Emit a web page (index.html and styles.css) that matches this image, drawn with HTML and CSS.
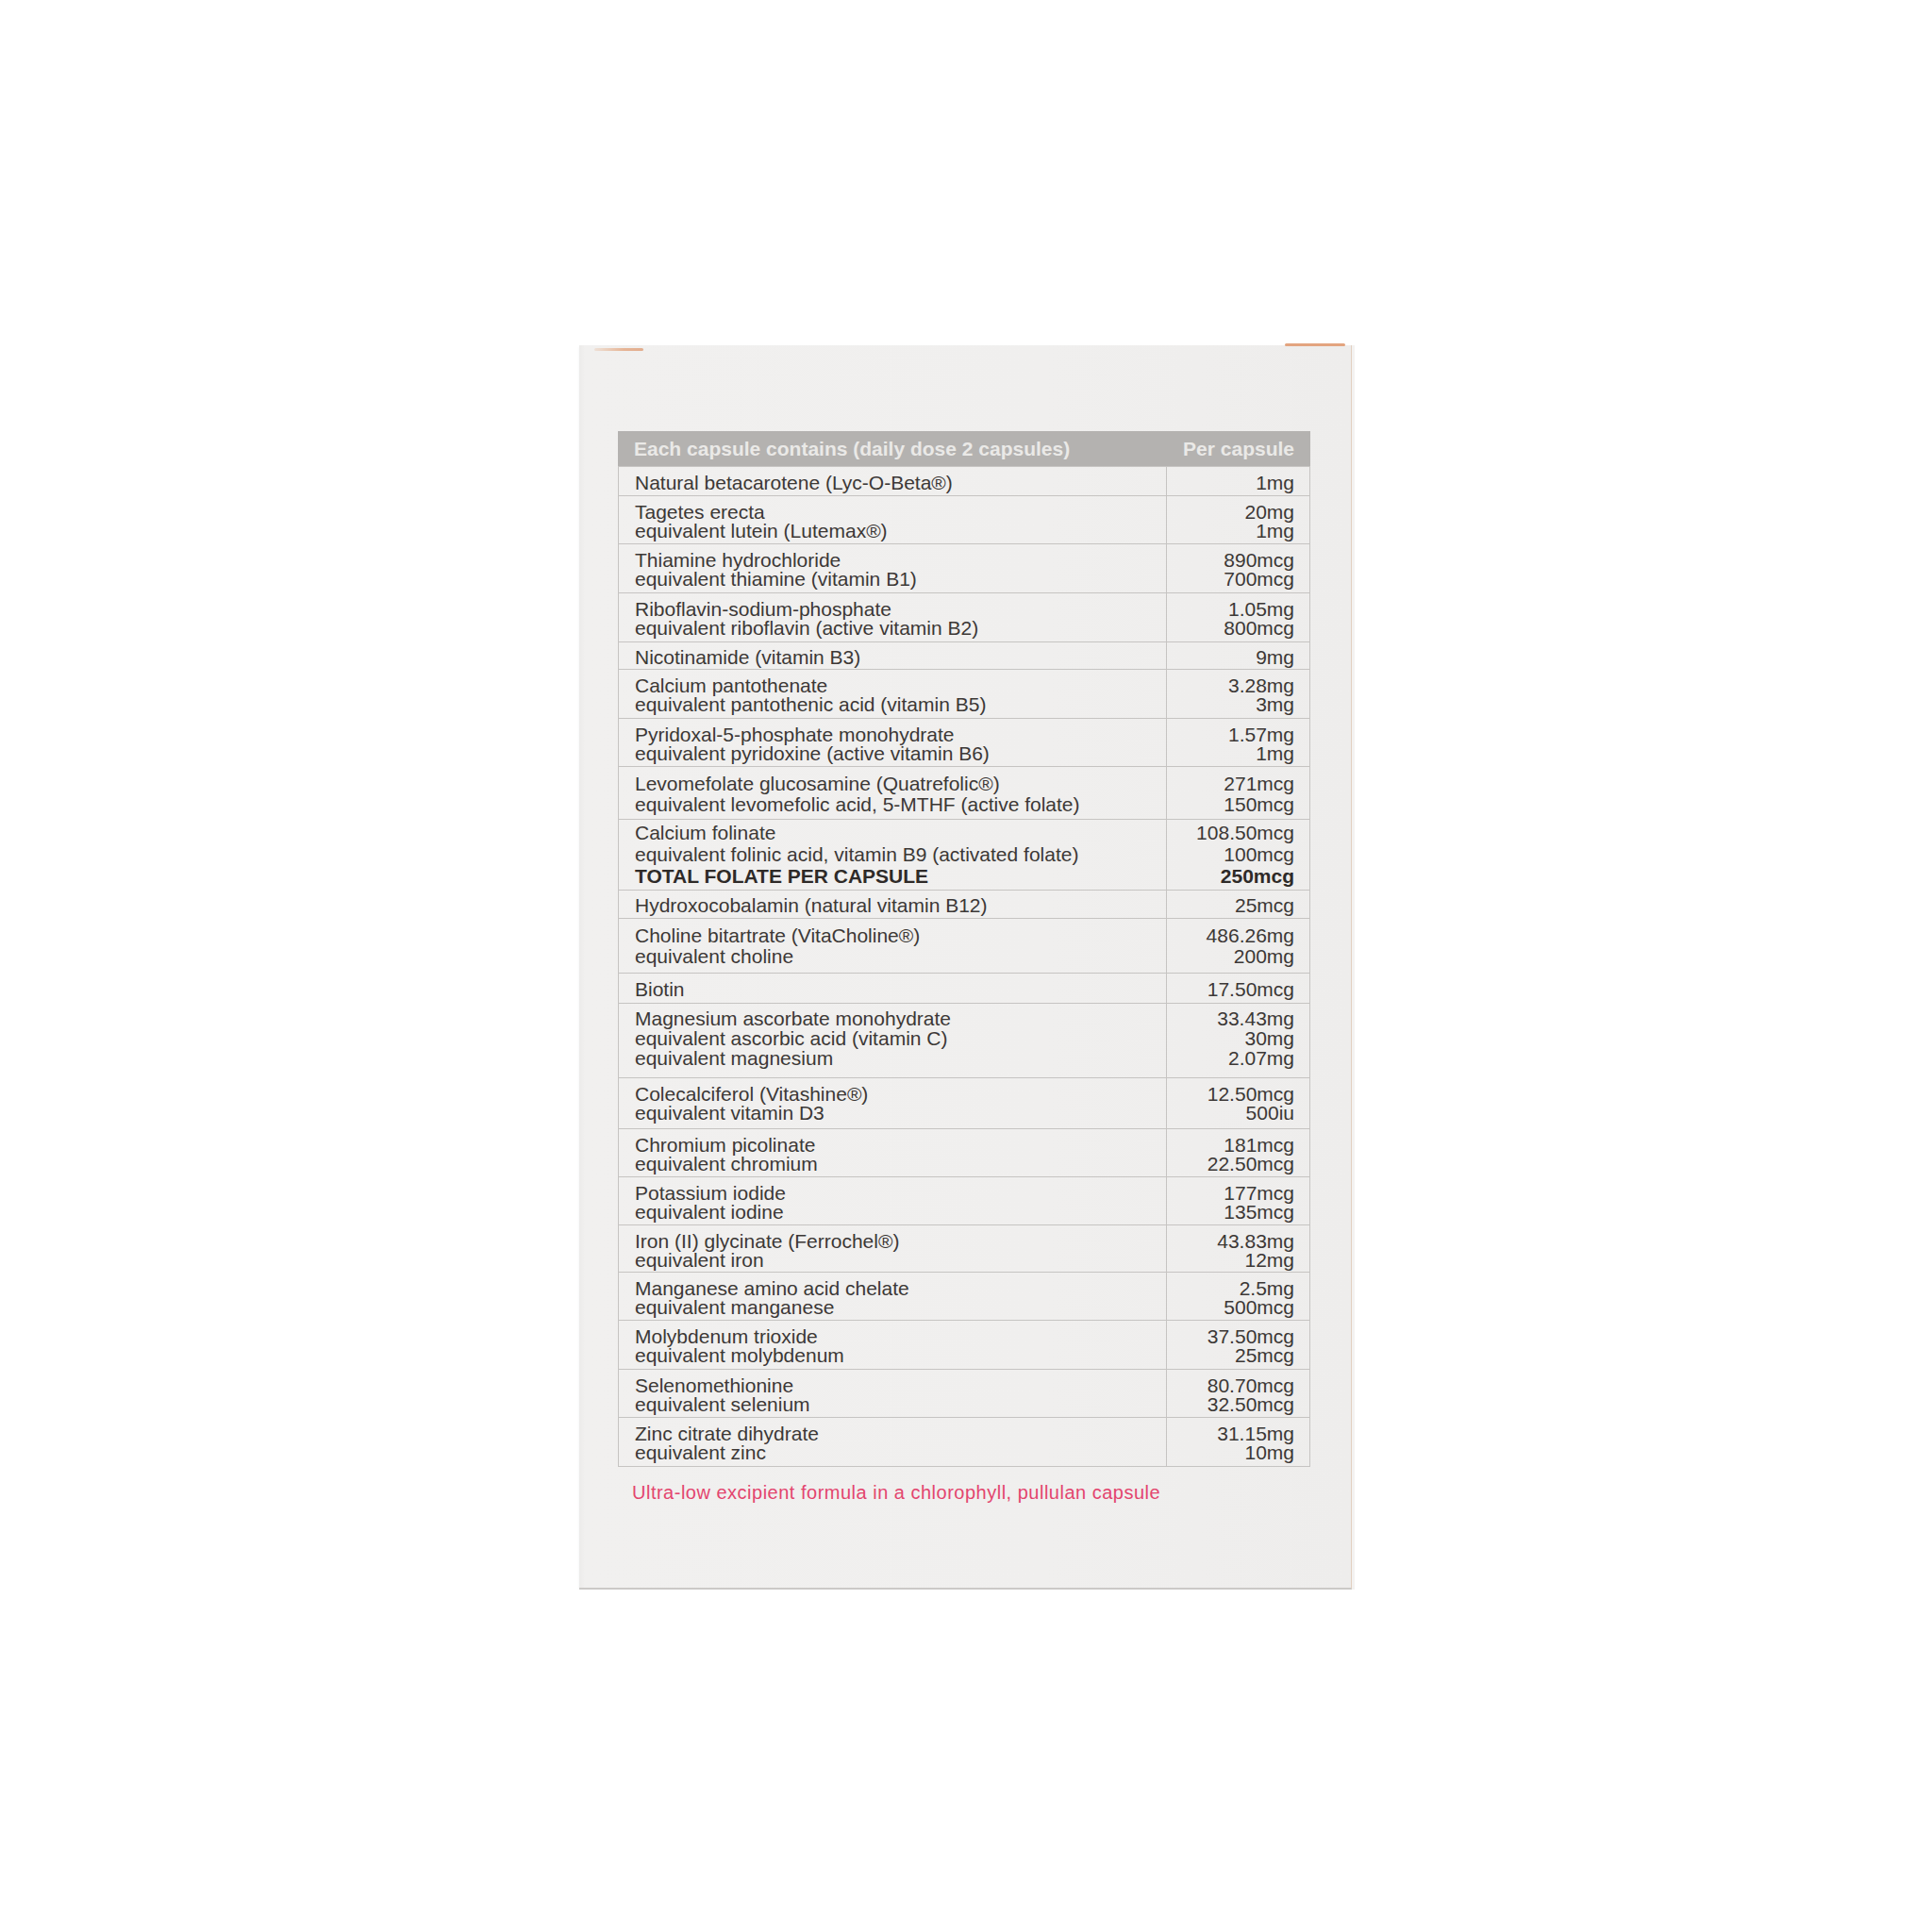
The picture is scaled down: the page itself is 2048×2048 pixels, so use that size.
FILE: index.html
```html
<!DOCTYPE html>
<html lang="en">
<head>
<meta charset="utf-8">
<title>Each capsule contains</title>
<link rel="stylesheet" href="styles.css">
</head>
<body>
<div class="card">
  <span class="tab tab-left"></span>
  <span class="tab tab-right"></span>
  <div class="panel">
    <div class="head">
      <span>Each capsule contains (daily dose 2 capsules)</span>
      <span>Per capsule</span>
    </div>
    <div class="row"><div class="name">Natural betacarotene (Lyc-O-Beta®)</div><div class="val">1mg</div></div>
    <div class="row r2"><div class="name">Tagetes erecta<br>equivalent lutein (Lutemax®)</div><div class="val">20mg<br>1mg</div></div>
    <div class="row r2 pb4"><div class="name">Thiamine hydrochloride<br>equivalent thiamine (vitamin B1)</div><div class="val">890mcg<br>700mcg</div></div>
    <div class="row r2 pb4"><div class="name">Riboflavin-sodium-phosphate<br>equivalent riboflavin (active vitamin B2)</div><div class="val">1.05mg<br>800mcg</div></div>
    <div class="row short"><div class="name">Nicotinamide (vitamin B3)</div><div class="val">9mg</div></div>
    <div class="row r2 pb4"><div class="name">Calcium pantothenate<br>equivalent pantothenic acid (vitamin B5)</div><div class="val">3.28mg<br>3mg</div></div>
    <div class="row r2"><div class="name">Pyridoxal-5-phosphate monohydrate<br>equivalent pyridoxine (active vitamin B6)</div><div class="val">1.57mg<br>1mg</div></div>
    <div class="row loose22"><div class="name">Levomefolate glucosamine (Quatrefolic®)<br>equivalent levomefolic acid, 5-MTHF (active folate)</div><div class="val">271mcg<br>150mcg</div></div>
    <div class="row folate"><div class="name">Calcium folinate<br>equivalent folinic acid, vitamin B9 (activated folate)<br><b>TOTAL FOLATE PER CAPSULE</b></div><div class="val">108.50mcg<br>100mcg<br><b>250mcg</b></div></div>
    <div class="row short2"><div class="name">Hydroxocobalamin (natural vitamin B12)</div><div class="val">25mcg</div></div>
    <div class="row choline"><div class="name">Choline bitartrate (VitaCholine®)<br>equivalent choline</div><div class="val">486.26mg<br>200mg</div></div>
    <div class="row pb4"><div class="name">Biotin</div><div class="val">17.50mcg</div></div>
    <div class="row mag"><div class="name">Magnesium ascorbate monohydrate<br>equivalent ascorbic acid (vitamin C)<br>equivalent magnesium</div><div class="val">33.43mg<br>30mg<br>2.07mg</div></div>
    <div class="row r2 pb6"><div class="name">Colecalciferol (Vitashine®)<br>equivalent vitamin D3</div><div class="val">12.50mcg<br>500iu</div></div>
    <div class="row r2"><div class="name">Chromium picolinate<br>equivalent chromium</div><div class="val">181mcg<br>22.50mcg</div></div>
    <div class="row r2"><div class="name">Potassium iodide<br>equivalent iodine</div><div class="val">177mcg<br>135mcg</div></div>
    <div class="row r2 pb2"><div class="name">Iron (II) glycinate (Ferrochel®)<br>equivalent iron</div><div class="val">43.83mg<br>12mg</div></div>
    <div class="row r2"><div class="name">Manganese amino acid chelate<br>equivalent manganese</div><div class="val">2.5mg<br>500mcg</div></div>
    <div class="row r2 pb4"><div class="name">Molybdenum trioxide<br>equivalent molybdenum</div><div class="val">37.50mcg<br>25mcg</div></div>
    <div class="row r2"><div class="name">Selenomethionine<br>equivalent selenium</div><div class="val">80.70mcg<br>32.50mcg</div></div>
    <div class="row r2 pb4"><div class="name">Zinc citrate dihydrate<br>equivalent zinc</div><div class="val">31.15mg<br>10mg</div></div>
  </div>
  <p class="note">Ultra-low excipient formula in a chlorophyll, pullulan capsule</p>
</div>
</body>
</html>
```

FILE: styles.css
```css
html, body {
  margin: 0;
  padding: 0;
  background: #ffffff;
}

body {
  font-family: "Liberation Sans", Arial, sans-serif;
  padding-top: 366px;
}

.card {
  position: relative;
  box-sizing: border-box;
  width: 819px;
  height: 1319px;
  margin-left: 614px;
  padding: 91px 45px 0 41px;
  background: linear-gradient(90deg, #ecebea 0px, #f1f0ef 6px, #f0efee 60%, #eeedec 100%);
  border-bottom: 2px solid #cbc9c7;
  border-right: 1px solid #e2cfc0;
  box-shadow: 3px 0 0 #f3f2f1, 0 2px 3px rgba(0, 0, 0, 0.06);
}

.tab {
  position: absolute;
  height: 3px;
  border-radius: 2px;
}

.tab-left {
  left: 16px;
  top: 3px;
  width: 52px;
  background: linear-gradient(90deg, rgba(232, 190, 160, 0.3), #e6b596 60%, #e2ae8f);
}

.tab-right {
  left: 748px;
  top: -2px;
  width: 64px;
  background: #e3a47f;
}

.panel {
  width: 734px;
  box-sizing: border-box;
  border-left: 1px solid #c6c4c2;
  border-right: 1px solid #c6c4c2;
  color: #3c3836;
  font-size: 21px;
}

.head {
  display: flex;
  justify-content: space-between;
  height: 37px;
  line-height: 38px;
  padding: 0 17px;
  margin: 0 -1px;
  background: #b4b2b0;
  color: #eae9e7;
  font-weight: bold;
  border-bottom: 1px solid #c6c4c2;
}

.row {
  --pt: 7px;
  --pb: 3px;
  --lh: 20px;
  display: grid;
  grid-template-columns: 1fr 151px;
  border-bottom: 1px solid #c6c4c2;
  line-height: var(--lh);
}

.name {
  padding: var(--pt) 8px var(--pb) 17px;
  border-right: 1px solid #c6c4c2;
  white-space: nowrap;
}

.val {
  padding: var(--pt) 16px var(--pb) 0;
  text-align: right;
  white-space: nowrap;
}

.pb2 { --pb: 2px; }
.pb4 { --pb: 4px; }
.pb6 { --pb: 6px; }

.short { --pt: 6px; --pb: 2px; }
.short2 { --pt: 6px; --pb: 3px; }

.loose22 { --lh: 22px; --pb: 4px; }
.folate { --lh: 23px; --pt: 2px; --pb: 3px; }
.choline { --lh: 22px; --pb: 6px; }
.mag { --lh: 21px; --pt: 5px; --pb: 10px; }

.row b {
  font-weight: bold;
  color: #2e2a28;
}

.note {
  margin: 16px 0 0 15px;
  font-size: 20px;
  letter-spacing: 0.5px;
  line-height: 22px;
  color: #e3456e;
}
```
